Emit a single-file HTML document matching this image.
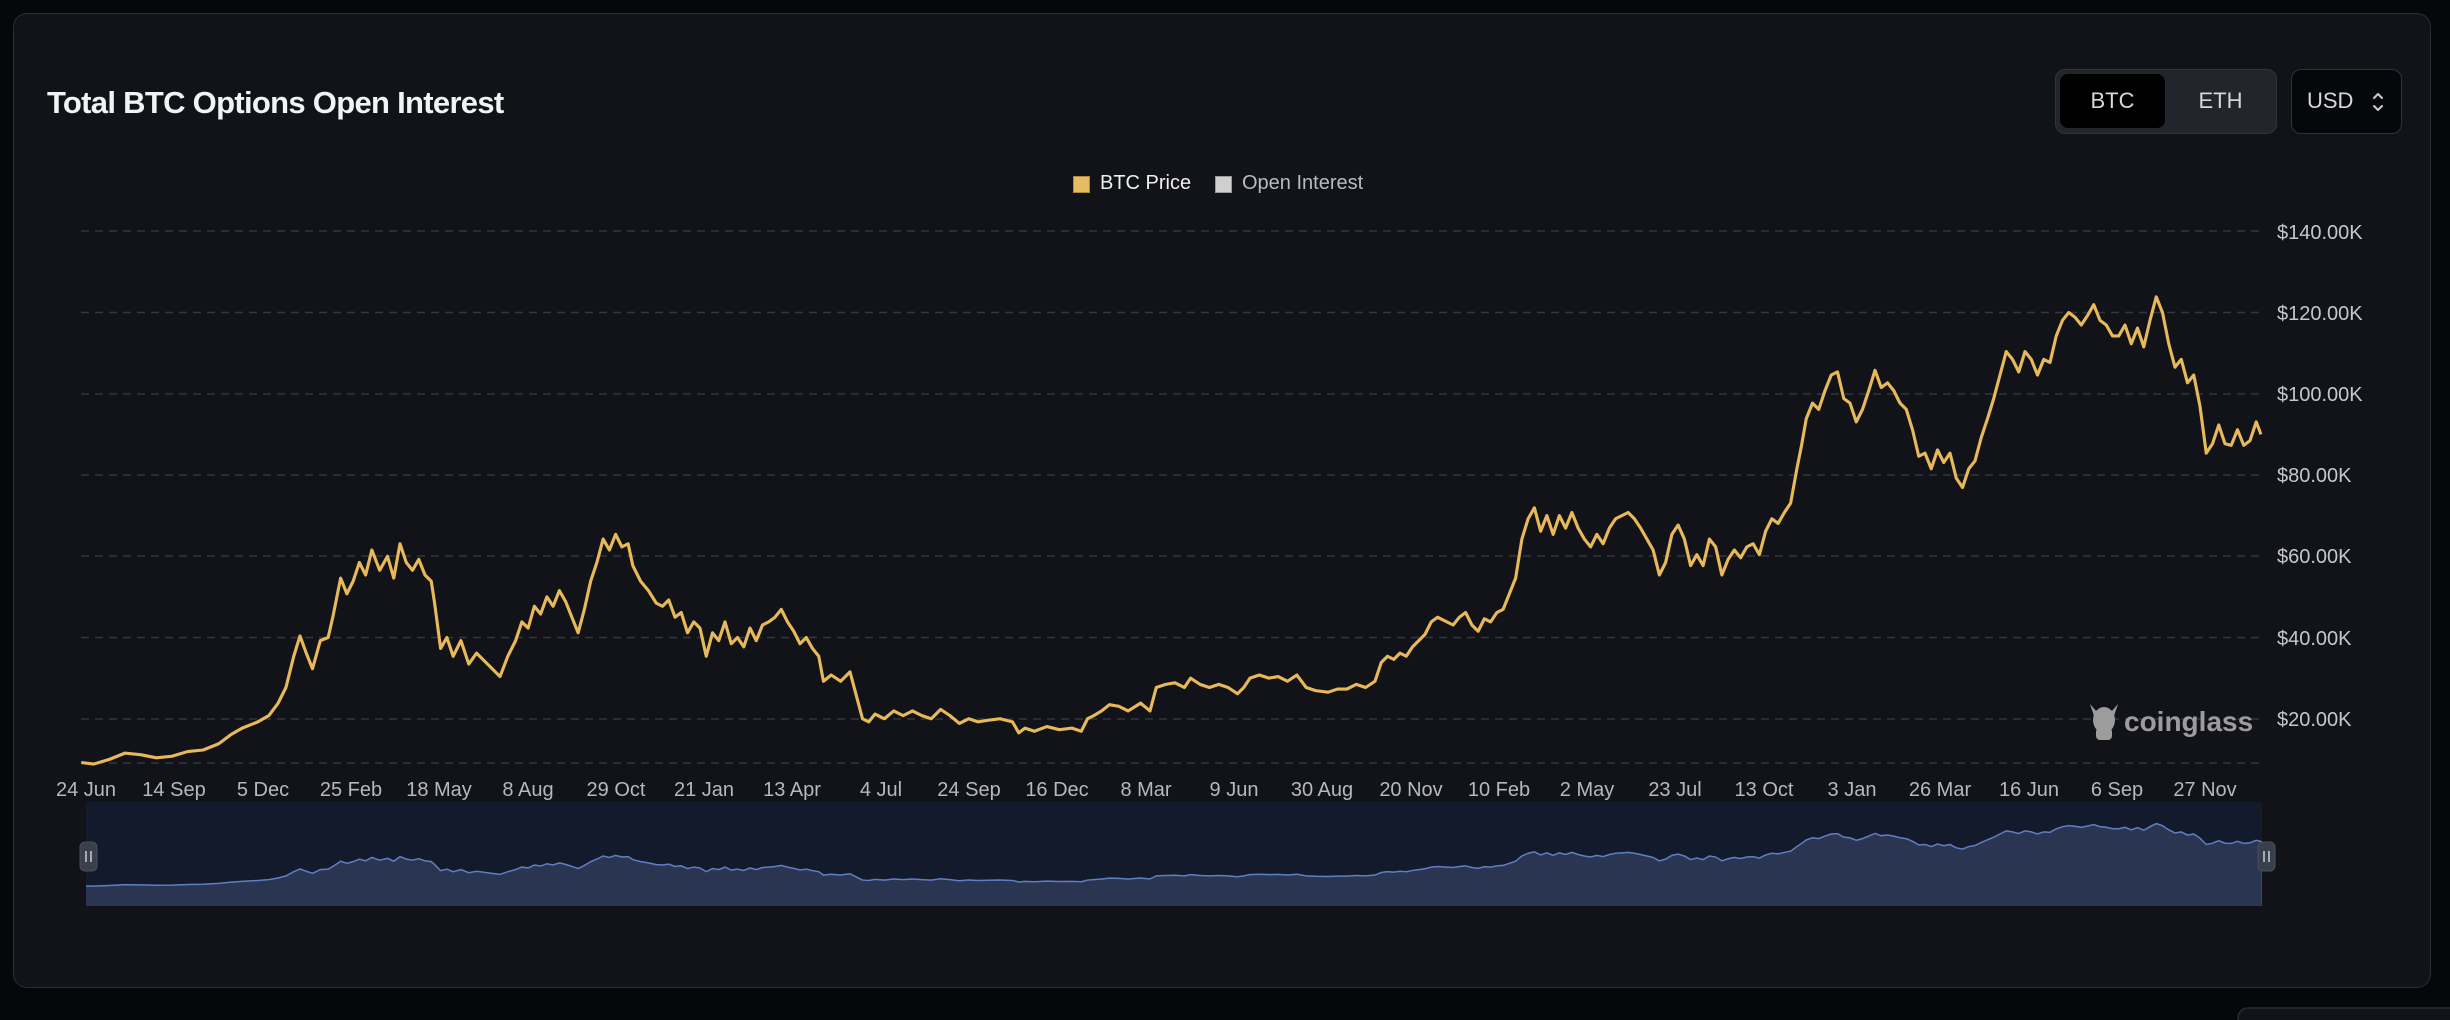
<!DOCTYPE html>
<html><head><meta charset="utf-8">
<style>
html,body{margin:0;padding:0;background:#05070b;width:2450px;height:1020px;overflow:hidden;font-family:"Liberation Sans",sans-serif;}
.card{position:absolute;left:13px;top:13px;width:2418px;height:975px;background:#111318;border:1.5px solid #2a2d33;border-radius:14px;box-sizing:border-box;}
.title{position:absolute;left:47px;top:85px;font-size:31px;font-weight:bold;color:#f2f3f5;letter-spacing:-0.7px;}
.grp{position:absolute;left:2055px;top:69px;width:222px;height:65px;background:#22252c;border:1.5px solid #30333a;border-radius:10px;box-sizing:border-box;}
.btc{position:absolute;left:4px;top:4px;width:105px;height:54px;background:#000;border-radius:8px;color:#d4d8de;font-size:22px;line-height:54px;text-align:center;}
.eth{position:absolute;left:112px;top:4px;width:105px;height:54px;color:#d4d8de;font-size:22px;line-height:54px;text-align:center;}
.usd{position:absolute;left:2291px;top:69px;width:111px;height:65px;background:#05070b;border:1.5px solid #30333a;border-radius:10px;box-sizing:border-box;color:#d4d8de;font-size:22px;line-height:62px;padding-left:15px;}
.leg{position:absolute;top:172px;font-size:20px;}
.sq{position:absolute;top:176px;width:17px;height:17px;box-sizing:border-box;}
</style></head><body>
<div class="card"></div>
<div class="title">Total BTC Options Open Interest</div>
<div class="grp"><div class="btc">BTC</div><div class="eth">ETH</div></div>
<div class="usd">USD<svg style="position:absolute;left:79px;top:20px" width="14" height="24" viewBox="0 0 14 24"><path d="M3 8 L7 4 L11 8 M3 16 L7 20 L11 16" fill="none" stroke="#c8ccd2" stroke-width="2" stroke-linecap="round" stroke-linejoin="round"/></svg></div>
<div class="sq" style="left:1073px;background:#e6bc62;border:1px solid #b08a3a"></div>
<div class="leg" style="left:1100px;color:#f0f0f0">BTC Price</div>
<div class="sq" style="left:1215px;background:#cfcfcf;border:1px solid #999"></div>
<div class="leg" style="left:1242px;color:#b8bcc2">Open Interest</div>

<svg style="position:absolute;left:0;top:0" width="2450" height="1020" viewBox="0 0 2450 1020">
<defs><clipPath id="nc"><rect x="86" y="802" width="2176" height="104"/></clipPath></defs>
<g stroke="#33363c" stroke-width="1.5" stroke-dasharray="8 6">
<line x1="81" y1="231" x2="2262" y2="231"/><line x1="81" y1="312.5" x2="2262" y2="312.5"/>
<line x1="81" y1="394" x2="2262" y2="394"/><line x1="81" y1="475" x2="2262" y2="475"/>
<line x1="81" y1="556" x2="2262" y2="556"/><line x1="81" y1="637.5" x2="2262" y2="637.5"/>
<line x1="81" y1="719" x2="2262" y2="719"/><line x1="81" y1="763" x2="2262" y2="763"/>
</g>
<g fill="#c4c7cc" font-size="20" font-family="Liberation Sans, sans-serif">
<text x="2277" y="239">$140.00K</text><text x="2277" y="320">$120.00K</text>
<text x="2277" y="401">$100.00K</text><text x="2277" y="482">$80.00K</text>
<text x="2277" y="563">$60.00K</text><text x="2277" y="645">$40.00K</text>
<text x="2277" y="726">$20.00K</text>
</g>
<g fill="#b4b8bf" font-size="20" font-family="Liberation Sans, sans-serif" text-anchor="middle">
<text x="86" y="796">24 Jun</text><text x="174" y="796">14 Sep</text><text x="263" y="796">5 Dec</text>
<text x="351" y="796">25 Feb</text><text x="439" y="796">18 May</text><text x="528" y="796">8 Aug</text>
<text x="616" y="796">29 Oct</text><text x="704" y="796">21 Jan</text><text x="792" y="796">13 Apr</text>
<text x="881" y="796">4 Jul</text><text x="969" y="796">24 Sep</text><text x="1057" y="796">16 Dec</text>
<text x="1146" y="796">8 Mar</text><text x="1234" y="796">9 Jun</text><text x="1322" y="796">30 Aug</text>
<text x="1411" y="796">20 Nov</text><text x="1499" y="796">10 Feb</text><text x="1587" y="796">2 May</text>
<text x="1675" y="796">23 Jul</text><text x="1764" y="796">13 Oct</text><text x="1852" y="796">3 Jan</text>
<text x="1940" y="796">26 Mar</text><text x="2029" y="796">16 Jun</text><text x="2117" y="796">6 Sep</text>
<text x="2205" y="796">27 Nov</text>
</g>
<g fill="#9c9c9c">
<ellipse cx="2104" cy="720" rx="11" ry="13"/>
<path d="M2090 704 L2097 712 L2111 712 L2118 704 L2114 716 L2094 716 Z"/>
<rect x="2096" y="728" width="16" height="12" rx="4"/>
<text x="2124" y="731" font-size="28" font-weight="bold" font-family="Liberation Sans, sans-serif">coinglass</text>
</g>
<rect x="86" y="802" width="2176" height="104" fill="#121a2b"/>
<g clip-path="url(#nc)">
<g transform="scale(1.5625) matrix(1,0,0,0.134,0,501.6)">
<path fill="#2a3552" stroke="#5f7fc4" stroke-width="1.5" vector-effect="non-scaling-stroke" d="M52,488 L60,489 L70,486 L80,482 L90,483 L100,485 L110,484 L120,481 L130,480 L140,476 L148,470 L155,466 L165,462 L172,458 L178,450 L183,440 L188,420 L192,407 L196,418 L200,428 L205,410 L210,408 L213,395 L218,370 L222,380 L226,372 L230,360 L234,368 L238,352 L243,365 L248,356 L252,370 L256,348 L260,360 L264,365 L268,358 L272,368 L276,372 L278,385 L282,415 L286,408 L290,420 L295,410 L300,425 L305,418 L310,423 L315,428 L320,433 L325,420 L330,410 L334,398 L338,402 L342,388 L346,393 L350,382 L354,388 L358,378 L362,385 L366,395 L370,405 L374,390 L378,372 L382,360 L386,345 L390,352 L394,342 L398,350 L402,348 L405,362 L410,372 L415,378 L420,386 L424,388 L428,384 L432,395 L436,392 L440,405 L444,398 L448,402 L452,420 L456,405 L460,410 L464,398 L468,412 L472,408 L476,414 L480,402 L484,410 L488,400 L492,398 L496,395 L500,390 L504,398 L508,404 L512,412 L516,408 L520,415 L524,420 L527,436 L532,432 L538,436 L544,430 L548,445 L552,460 L556,462 L560,457 L566,460 L572,455 L578,458 L584,455 L590,458 L596,460 L602,454 L608,458 L614,463 L620,460 L626,462 L632,461 L640,460 L648,462 L652,469 L656,466 L662,468 L670,465 L678,467 L686,466 L692,468 L696,460 L700,458 L705,455 L710,451 L716,452 L722,455 L730,450 L736,455 L740,440 L746,438 L752,437 L758,440 L762,434 L768,438 L774,440 L780,438 L786,440 L792,444 L796,440 L800,434 L806,432 L812,434 L818,433 L824,436 L830,432 L836,440 L842,442 L850,443 L856,441 L862,441 L868,438 L874,440 L880,436 L884,424 L888,420 L892,422 L896,418 L900,420 L904,414 L908,410 L912,406 L916,398 L920,395 L926,398 L930,400 L934,395 L938,392 L942,400 L946,404 L950,396 L954,398 L958,392 L962,390 L966,380 L970,370 L974,345 L978,332 L982,325 L986,340 L990,330 L994,342 L998,330 L1002,338 L1006,328 L1010,338 L1014,345 L1018,350 L1022,342 L1026,348 L1030,338 L1034,332 L1038,330 L1042,328 L1046,332 L1050,338 L1054,345 L1058,352 L1062,368 L1066,360 L1070,342 L1074,336 L1078,345 L1082,362 L1086,355 L1090,362 L1094,345 L1098,350 L1102,368 L1106,358 L1110,352 L1114,357 L1118,350 L1122,348 L1126,355 L1130,340 L1134,332 L1138,335 L1142,328 L1146,322 L1150,300 L1153,285 L1156,268 L1160,258 L1164,262 L1168,250 L1172,240 L1176,238 L1180,255 L1184,258 L1188,270 L1192,262 L1196,250 L1200,237 L1204,248 L1208,245 L1212,250 L1216,258 L1220,262 L1224,275 L1228,292 L1232,290 L1236,300 L1240,288 L1244,296 L1248,290 L1252,306 L1256,312 L1260,300 L1264,295 L1268,280 L1272,268 L1276,255 L1280,240 L1284,225 L1288,230 L1292,238 L1296,225 L1300,230 L1304,240 L1308,230 L1312,232 L1316,215 L1320,205 L1324,200 L1328,203 L1332,208 L1336,202 L1340,195 L1344,205 L1348,208 L1352,215 L1356,215 L1360,208 L1364,220 L1368,210 L1372,222 L1376,205 L1380,190 L1384,200 L1388,220 L1392,235 L1396,230 L1400,245 L1404,240 L1408,260 L1412,290 L1416,284 L1420,272 L1424,284 L1428,285 L1432,275 L1436,285 L1440,282 L1444,270 L1448,278 L1448,600 L52,600 Z"/>
</g>
</g>
<rect x="80" y="842" width="17" height="29" rx="5" fill="#3a3f4c" stroke="#4a4f5c"/>
<path d="M86 851 V862 M91 851 V862" stroke="#c0c4cc" stroke-width="1.6"/>
<rect x="2258" y="842" width="17" height="29" rx="5" fill="#3a3f4c" stroke="#4a4f5c"/>
<path d="M2264 851 V862 M2269 851 V862" stroke="#c0c4cc" stroke-width="1.6"/>
<g transform="scale(1.5625)">
<path fill="none" stroke="#e8b95b" stroke-width="2" stroke-linejoin="round" d="M52,488 L60,489 L70,486 L80,482 L90,483 L100,485 L110,484 L120,481 L130,480 L140,476 L148,470 L155,466 L165,462 L172,458 L178,450 L183,440 L188,420 L192,407 L196,418 L200,428 L205,410 L210,408 L213,395 L218,370 L222,380 L226,372 L230,360 L234,368 L238,352 L243,365 L248,356 L252,370 L256,348 L260,360 L264,365 L268,358 L272,368 L276,372 L278,385 L282,415 L286,408 L290,420 L295,410 L300,425 L305,418 L310,423 L315,428 L320,433 L325,420 L330,410 L334,398 L338,402 L342,388 L346,393 L350,382 L354,388 L358,378 L362,385 L366,395 L370,405 L374,390 L378,372 L382,360 L386,345 L390,352 L394,342 L398,350 L402,348 L405,362 L410,372 L415,378 L420,386 L424,388 L428,384 L432,395 L436,392 L440,405 L444,398 L448,402 L452,420 L456,405 L460,410 L464,398 L468,412 L472,408 L476,414 L480,402 L484,410 L488,400 L492,398 L496,395 L500,390 L504,398 L508,404 L512,412 L516,408 L520,415 L524,420 L527,436 L532,432 L538,436 L544,430 L548,445 L552,460 L556,462 L560,457 L566,460 L572,455 L578,458 L584,455 L590,458 L596,460 L602,454 L608,458 L614,463 L620,460 L626,462 L632,461 L640,460 L648,462 L652,469 L656,466 L662,468 L670,465 L678,467 L686,466 L692,468 L696,460 L700,458 L705,455 L710,451 L716,452 L722,455 L730,450 L736,455 L740,440 L746,438 L752,437 L758,440 L762,434 L768,438 L774,440 L780,438 L786,440 L792,444 L796,440 L800,434 L806,432 L812,434 L818,433 L824,436 L830,432 L836,440 L842,442 L850,443 L856,441 L862,441 L868,438 L874,440 L880,436 L884,424 L888,420 L892,422 L896,418 L900,420 L904,414 L908,410 L912,406 L916,398 L920,395 L926,398 L930,400 L934,395 L938,392 L942,400 L946,404 L950,396 L954,398 L958,392 L962,390 L966,380 L970,370 L974,345 L978,332 L982,325 L986,340 L990,330 L994,342 L998,330 L1002,338 L1006,328 L1010,338 L1014,345 L1018,350 L1022,342 L1026,348 L1030,338 L1034,332 L1038,330 L1042,328 L1046,332 L1050,338 L1054,345 L1058,352 L1062,368 L1066,360 L1070,342 L1074,336 L1078,345 L1082,362 L1086,355 L1090,362 L1094,345 L1098,350 L1102,368 L1106,358 L1110,352 L1114,357 L1118,350 L1122,348 L1126,355 L1130,340 L1134,332 L1138,335 L1142,328 L1146,322 L1150,300 L1153,285 L1156,268 L1160,258 L1164,262 L1168,250 L1172,240 L1176,238 L1180,255 L1184,258 L1188,270 L1192,262 L1196,250 L1200,237 L1204,248 L1208,245 L1212,250 L1216,258 L1220,262 L1224,275 L1228,292 L1232,290 L1236,300 L1240,288 L1244,296 L1248,290 L1252,306 L1256,312 L1260,300 L1264,295 L1268,280 L1272,268 L1276,255 L1280,240 L1284,225 L1288,230 L1292,238 L1296,225 L1300,230 L1304,240 L1308,230 L1312,232 L1316,215 L1320,205 L1324,200 L1328,203 L1332,208 L1336,202 L1340,195 L1344,205 L1348,208 L1352,215 L1356,215 L1360,208 L1364,220 L1368,210 L1372,222 L1376,205 L1380,190 L1384,200 L1388,220 L1392,235 L1396,230 L1400,245 L1404,240 L1408,260 L1412,290 L1416,284 L1420,272 L1424,284 L1428,285 L1432,275 L1436,285 L1440,282 L1444,270 L1447,278"/>
</g>
<rect x="2238" y="1008" width="240" height="20" rx="10" fill="#111318" stroke="#2a2d33" stroke-width="1.5"/>
</svg>
</body></html>
